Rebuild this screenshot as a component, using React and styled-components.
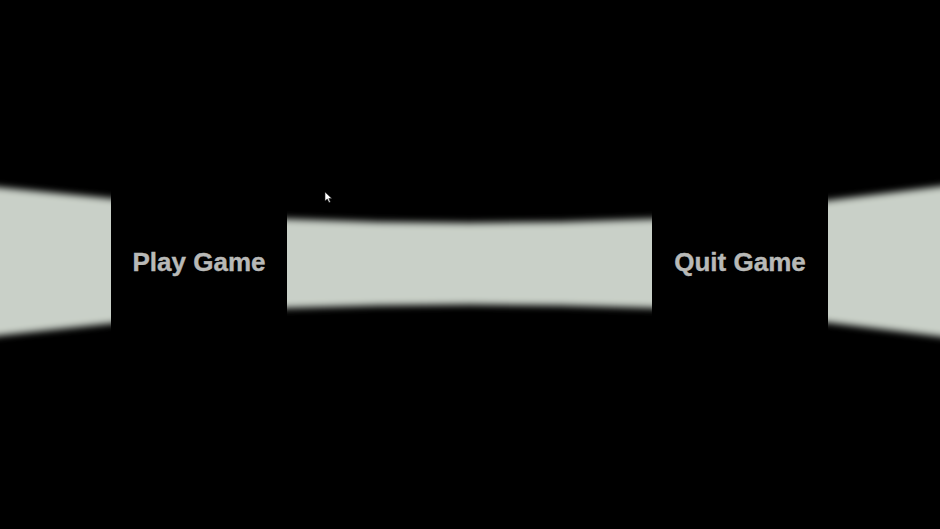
import React from 'react'
import styled, {createGlobalStyle} from 'styled-components'

const GlobalStyle = createGlobalStyle`
    html, body {
        margin: 0;
        padding: 0;
        background: #000;
    }
`

const shapes = {
    left: 'polygon(0px 9px, 111px 20px, 111px 145px, 0px 157px)',
    middle: 'polygon(0px 40.5px, 91px 43.5px, 182px 44.5px, 274px 43.5px, 365px 40.5px, 365px 129.5px, 274px 127px, 182px 126px, 91px 127px, 0px 129.5px)',
    right: 'polygon(0px 22px, 112px 8px, 112px 158px, 0px 144px)',
}

function App() {
    return (
        <>
            <GlobalStyle />
            <Screen>
                <BlurDefs width="0" height="0" aria-hidden="true">
                    <filter id="vblur" x="-5%" y="-20%" width="110%" height="140%">
                        <feGaussianBlur stdDeviation="0.5 3.5" />
                    </filter>
                </BlurDefs>
                <Carousel>
                    <Panel>
                        <PanelFace shape={shapes.left} />
                    </Panel>
                    <Label>Play Game</Label>
                    <Panel>
                        <PanelFace shape={shapes.middle} />
                    </Panel>
                    <Label>Quit Game</Label>
                    <Panel>
                        <PanelFace shape={shapes.right} />
                    </Panel>
                </Carousel>
                <Cursor width="9" height="13" viewBox="0 0 9 13">
                    <path d="M1 1 L1 10 L3.3 8 L5 11.6 L6.4 11 L4.8 7.6 L7.8 7.4 Z" fill="#fff" stroke="#222" strokeWidth="0.6" />
                </Cursor>
            </Screen>
        </>
    )
}

const Screen = styled.div`
    position: relative;
    width: 940px;
    height: 529px;
    background: #000;
    display: flex;
    align-items: center;
    overflow: hidden;
`

const BlurDefs = styled.svg`
    position: absolute;
`

const Carousel = styled.div`
    display: grid;
    grid-template-columns: 111px 176px 365px 176px 112px;
    height: 172px;
    width: 940px;
`

const Panel = styled.div`
    filter: url(#vblur);
`

const PanelFace = styled.div`
    height: 100%;
    background: #c9d0c8;
    clip-path: ${props => props.shape};
`

const Label = styled.div`
    display: flex;
    align-items: center;
    justify-content: center;
    padding-bottom: 4px;
    font-family: "Liberation Sans", Arial, sans-serif;
    font-weight: 700;
    font-size: 26px;
    color: #b8b9b7;
    -webkit-text-stroke: 0.4px #b8b9b7;
`

const Cursor = styled.svg`
    position: absolute;
    left: 324px;
    top: 191px;
`

export default App
